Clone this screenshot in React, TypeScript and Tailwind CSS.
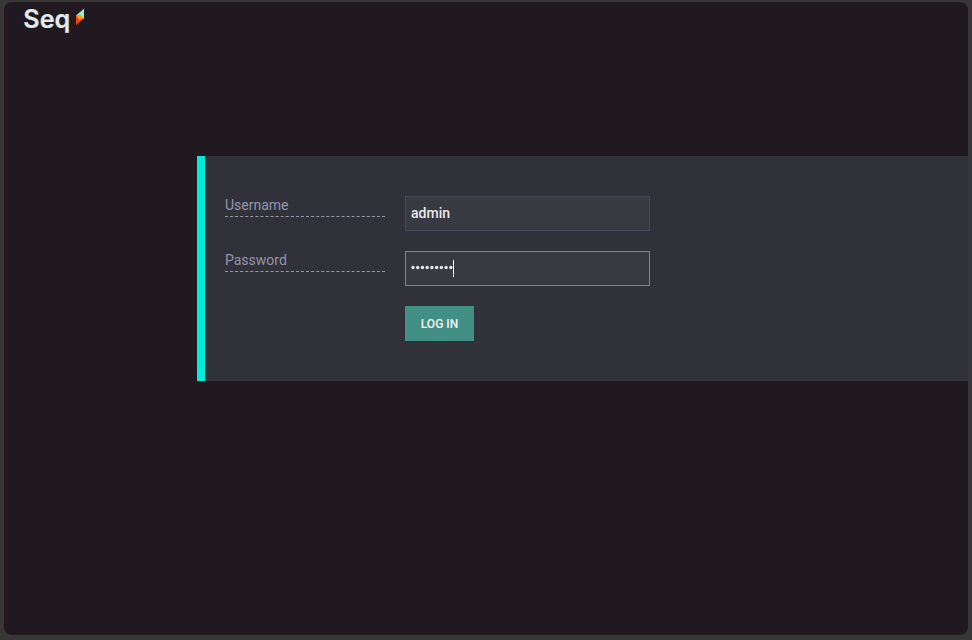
import React, { useState } from "react";

function Logo() {
  return (
    <svg width="64" height="36" viewBox="0 0 64 36" role="img" aria-label="Seq" className="block overflow-visible">
      <text x="0.3" y="26.4" textLength="47" lengthAdjust="spacingAndGlyphs" fill="#e4ebed" stroke="#e4ebed" strokeWidth="0.2" fontSize="25" fontWeight="600" fontFamily="Inter, sans-serif">Seq</text>
      <path d="M61 6.8 53 13.5 61 17.4Z" fill="#9eeccd" />
      <path d="M53 13.3V23.2L61 16.4Z" fill="#e8420b" />
      <path d="M53 13.6 57 12.6 60.5 15.8 56.5 18Z" fill="#ff9d20" />
    </svg>
  );
}

function Label({ htmlFor, children }: { htmlFor: string; children: React.ReactNode }) {
  return (
    <label htmlFor={htmlFor} className="block h-[21px] w-40 border-b border-dashed border-[#9a98ab] text-sm leading-[19px] text-[#9594ad]">
      {children}
    </label>
  );
}

export default function App() {
  const [user, setUser] = useState("admin");
  return (
    <main className="h-[640px] w-[972px] overflow-hidden bg-[#373737] pt-0.5 pr-1 pb-[5px] pl-1 font-[Roboto,sans-serif]">
      <div className="flex h-full flex-col overflow-hidden rounded-lg bg-[#201a20]">
        <header className="h-[154px] pl-[19px]">
          <Logo />
        </header>
        <form className="ml-[193px] flex h-[225px] flex-col gap-5 border-l-8 border-[#00ecd9] bg-[#31313a] pt-10 pl-5" onSubmit={(e) => e.preventDefault()}>
          <div className="flex h-[35px] gap-5">
            <Label htmlFor="username">Username</Label>
            <input id="username" value={user} onChange={(e) => setUser(e.target.value)} className="h-[35px] w-[245px] border border-[#49475c] bg-[#393942] px-[5px] pb-0.5 text-sm font-medium text-[#e9e9ed] outline-none" />
          </div>
          <div className="flex h-[35px] gap-5">
            <Label htmlFor="password">Password</Label>
            <div id="password" className="flex h-[35px] w-[245px] items-center border border-[#18b798] bg-[#393942] pl-[5px]">
              <svg width="42" height="17" viewBox="0 0 42 17" fill="#e9e9ed" className="block">
                {Array.from({ length: 9 }, (_, i) => (
                  <circle key={i} cx={2 + i * 4.73} cy="7.5" r="1.7" />
                ))}
              </svg>
              <span className="h-[17px] w-px bg-white" />
            </div>
          </div>
          <button className="ml-[180px] h-[35px] w-[69px] bg-[#428f85] text-xs font-medium text-[#f1f7f6]">LOG IN</button>
        </form>
      </div>
    </main>
  );
}
